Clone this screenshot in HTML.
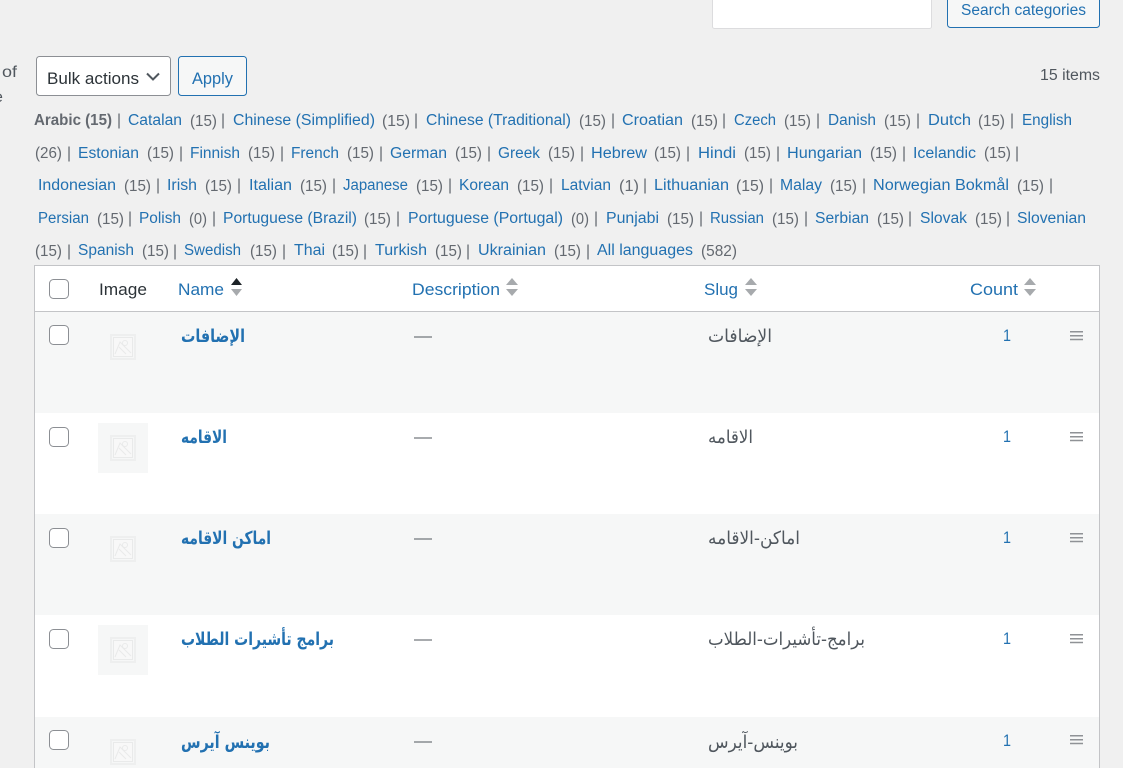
<!DOCTYPE html>
<html lang="en"><head><meta charset="utf-8"><title>Categories</title>
<style>
html,body{margin:0;padding:0;background:#f0f0f0;overflow:hidden;width:1123px;height:768px}
svg{display:block;position:absolute;left:0;top:0}
text{font-family:"Liberation Sans","DejaVu Sans",sans-serif;font-size:15.5px;fill:#646970}
.l{fill:#2271b1}
.s{fill:#646970}
.d{fill:#50575e;font-size:16px}
.h{font-size:16.5px}
.ar{font-family:"DejaVu Sans",sans-serif;direction:rtl;font-size:18px}
.n{fill:#2271b1;font-weight:bold}
.g{fill:#50575e}
.cb{fill:#fff;stroke:#8c8f94;stroke-width:1}
</style></head><body>
<svg width="1123" height="768" viewBox="0 0 1123 768" xmlns="http://www.w3.org/2000/svg">
<defs>
<g id="ph"><rect x="1" y="1" width="24" height="24" fill="#f6f7f7" stroke="#eeefef" stroke-width="2"/><rect x="3.500" y="3.500" width="19" height="19" fill="#f8f8f8" stroke="#e9eaea"/><path d="M5 20 L10 8 L21 19 M9 13 L16 20" fill="none" stroke="#e9eaea" stroke-width="1"/><circle cx="15" cy="9" r="2.500" fill="none" stroke="#e9eaea"/></g>
<path id="hd" d="M0 .75H13M0 4.75H13M0 8.5H13" stroke="#8f9296" stroke-width="1.5" fill="none"/>
</defs>
<rect width="1123" height="768" fill="#f0f0f0"/>

<rect x="712.500" y="-5" width="219" height="33.500" rx="2" fill="#fff" stroke="#dcdcde"/>
<rect x="947.500" y="-5" width="152" height="32.500" rx="3" fill="#f6f7f7" stroke="#2271b1"/>
<text class="l" x="961" y="15" textLength="125" lengthAdjust="spacingAndGlyphs">Search categories</text>
<text x="2" y="77" class="d" textLength="15" lengthAdjust="spacingAndGlyphs">of</text>
<text x="-6" y="102" class="d">e</text>

<rect x="36.500" y="56.500" width="134" height="39" rx="3" fill="#fff" stroke="#8c8f94"/>
<text class="h" x="47" y="84" textLength="92" lengthAdjust="spacingAndGlyphs" style="fill:#2c3338">Bulk actions</text>
<path d="M147 73.500L153 79.500L159 73.500" fill="none" stroke="#50575e" stroke-width="2"/>
<rect x="178.500" y="56.500" width="68" height="39" rx="3" fill="#f6f7f7" stroke="#2271b1"/>
<text class="l h" x="192" y="84" textLength="41" lengthAdjust="spacingAndGlyphs">Apply</text>
<text x="1040" y="80" textLength="60" lengthAdjust="spacingAndGlyphs" style="fill:#50575e">15 items</text>

<!-- filter line 1 -->
<text x="34" y="125" style="font-weight:bold" textLength="78" lengthAdjust="spacingAndGlyphs">Arabic (15)</text><text class="s" x="117" y="125">|</text>
<text class="l" x="128" y="125" textLength="54" lengthAdjust="spacingAndGlyphs">Catalan</text><text x="190" y="126" textLength="27" lengthAdjust="spacingAndGlyphs">(15)</text><text class="s" x="221" y="125">|</text>
<text class="l" x="233" y="125" textLength="142" lengthAdjust="spacingAndGlyphs">Chinese (Simplified)</text><text x="382" y="126" textLength="28" lengthAdjust="spacingAndGlyphs">(15)</text><text class="s" x="414" y="125">|</text>
<text class="l" x="426" y="125" textLength="145" lengthAdjust="spacingAndGlyphs">Chinese (Traditional)</text><text x="579" y="126" textLength="27" lengthAdjust="spacingAndGlyphs">(15)</text><text class="s" x="611" y="125">|</text>
<text class="l" x="622" y="125" textLength="61" lengthAdjust="spacingAndGlyphs">Croatian</text><text x="691" y="126" textLength="27" lengthAdjust="spacingAndGlyphs">(15)</text><text class="s" x="722" y="125">|</text>
<text class="l" x="734" y="125" textLength="42" lengthAdjust="spacingAndGlyphs">Czech</text><text x="784" y="126" textLength="27" lengthAdjust="spacingAndGlyphs">(15)</text><text class="s" x="816" y="125">|</text>
<text class="l" x="828" y="125" textLength="48" lengthAdjust="spacingAndGlyphs">Danish</text><text x="884" y="126" textLength="27" lengthAdjust="spacingAndGlyphs">(15)</text><text class="s" x="916" y="125">|</text>
<text class="l" x="928" y="125" textLength="43" lengthAdjust="spacingAndGlyphs">Dutch</text><text x="978" y="126" textLength="27" lengthAdjust="spacingAndGlyphs">(15)</text><text class="s" x="1010" y="125">|</text>
<text class="l" x="1022" y="125" textLength="50" lengthAdjust="spacingAndGlyphs">English</text>

<!-- filter line 2 -->
<text x="35" y="158" textLength="27" lengthAdjust="spacingAndGlyphs">(26)</text><text class="s" x="67" y="158">|</text>
<text class="l" x="78" y="158" textLength="61" lengthAdjust="spacingAndGlyphs">Estonian</text><text x="147" y="158" textLength="27" lengthAdjust="spacingAndGlyphs">(15)</text><text class="s" x="179" y="158">|</text>
<text class="l" x="190" y="158" textLength="50" lengthAdjust="spacingAndGlyphs">Finnish</text><text x="248" y="158" textLength="27" lengthAdjust="spacingAndGlyphs">(15)</text><text class="s" x="280" y="158">|</text>
<text class="l" x="291" y="158" textLength="48" lengthAdjust="spacingAndGlyphs">French</text><text x="347" y="158" textLength="27" lengthAdjust="spacingAndGlyphs">(15)</text><text class="s" x="379" y="158">|</text>
<text class="l" x="390" y="158" textLength="57" lengthAdjust="spacingAndGlyphs">German</text><text x="455" y="158" textLength="27" lengthAdjust="spacingAndGlyphs">(15)</text><text class="s" x="487" y="158">|</text>
<text class="l" x="498" y="158" textLength="42" lengthAdjust="spacingAndGlyphs">Greek</text><text x="548" y="158" textLength="27" lengthAdjust="spacingAndGlyphs">(15)</text><text class="s" x="580" y="158">|</text>
<text class="l" x="591" y="158" textLength="56" lengthAdjust="spacingAndGlyphs">Hebrew</text><text x="654" y="158" textLength="27" lengthAdjust="spacingAndGlyphs">(15)</text><text class="s" x="686" y="158">|</text>
<text class="l" x="698" y="158" textLength="38" lengthAdjust="spacingAndGlyphs">Hindi</text><text x="744" y="158" textLength="27" lengthAdjust="spacingAndGlyphs">(15)</text><text class="s" x="776" y="158">|</text>
<text class="l" x="787" y="158" textLength="75" lengthAdjust="spacingAndGlyphs">Hungarian</text><text x="870" y="158" textLength="27" lengthAdjust="spacingAndGlyphs">(15)</text><text class="s" x="902" y="158">|</text>
<text class="l" x="913" y="158" textLength="63" lengthAdjust="spacingAndGlyphs">Icelandic</text><text x="984" y="158" textLength="27" lengthAdjust="spacingAndGlyphs">(15)</text><text class="s" x="1015" y="158">|</text>

<!-- filter line 3 -->
<text class="l" x="38" y="190" textLength="78" lengthAdjust="spacingAndGlyphs">Indonesian</text><text x="124" y="191" textLength="27" lengthAdjust="spacingAndGlyphs">(15)</text><text class="s" x="156" y="190">|</text>
<text class="l" x="167" y="190" textLength="30" lengthAdjust="spacingAndGlyphs">Irish</text><text x="205" y="191" textLength="27" lengthAdjust="spacingAndGlyphs">(15)</text><text class="s" x="237" y="190">|</text>
<text class="l" x="249" y="190" textLength="43" lengthAdjust="spacingAndGlyphs">Italian</text><text x="300" y="191" textLength="27" lengthAdjust="spacingAndGlyphs">(15)</text><text class="s" x="332" y="190">|</text>
<text class="l" x="343" y="190" textLength="65" lengthAdjust="spacingAndGlyphs">Japanese</text><text x="416" y="191" textLength="27" lengthAdjust="spacingAndGlyphs">(15)</text><text class="s" x="448" y="190">|</text>
<text class="l" x="459" y="190" textLength="50" lengthAdjust="spacingAndGlyphs">Korean</text><text x="517" y="191" textLength="27" lengthAdjust="spacingAndGlyphs">(15)</text><text class="s" x="549" y="190">|</text>
<text class="l" x="561" y="190" textLength="50" lengthAdjust="spacingAndGlyphs">Latvian</text><text x="619" y="191" textLength="20" lengthAdjust="spacingAndGlyphs">(1)</text><text class="s" x="643" y="190">|</text>
<text class="l" x="654" y="190" textLength="75" lengthAdjust="spacingAndGlyphs">Lithuanian</text><text x="736" y="191" textLength="28" lengthAdjust="spacingAndGlyphs">(15)</text><text class="s" x="769" y="190">|</text>
<text class="l" x="780" y="190" textLength="42" lengthAdjust="spacingAndGlyphs">Malay</text><text x="830" y="191" textLength="27" lengthAdjust="spacingAndGlyphs">(15)</text><text class="s" x="862" y="190">|</text>
<text class="l" x="873" y="190" textLength="136" lengthAdjust="spacingAndGlyphs">Norwegian Bokmål</text><text x="1017" y="191" textLength="27" lengthAdjust="spacingAndGlyphs">(15)</text><text class="s" x="1049" y="190">|</text>

<!-- filter line 4 -->
<text class="l" x="38" y="223" textLength="51" lengthAdjust="spacingAndGlyphs">Persian</text><text x="97" y="224" textLength="27" lengthAdjust="spacingAndGlyphs">(15)</text><text class="s" x="128" y="223">|</text>
<text class="l" x="139" y="223" textLength="42" lengthAdjust="spacingAndGlyphs">Polish</text><text x="189" y="224" textLength="18" lengthAdjust="spacingAndGlyphs">(0)</text><text class="s" x="212" y="223">|</text>
<text class="l" x="223" y="223" textLength="134" lengthAdjust="spacingAndGlyphs">Portuguese (Brazil)</text><text x="364" y="224" textLength="27" lengthAdjust="spacingAndGlyphs">(15)</text><text class="s" x="396" y="223">|</text>
<text class="l" x="408" y="223" textLength="155" lengthAdjust="spacingAndGlyphs">Portuguese (Portugal)</text><text x="571" y="224" textLength="18" lengthAdjust="spacingAndGlyphs">(0)</text><text class="s" x="594" y="223">|</text>
<text class="l" x="606" y="223" textLength="53" lengthAdjust="spacingAndGlyphs">Punjabi</text><text x="667" y="224" textLength="27" lengthAdjust="spacingAndGlyphs">(15)</text><text class="s" x="699" y="223">|</text>
<text class="l" x="710" y="223" textLength="54" lengthAdjust="spacingAndGlyphs">Russian</text><text x="772" y="224" textLength="27" lengthAdjust="spacingAndGlyphs">(15)</text><text class="s" x="804" y="223">|</text>
<text class="l" x="815" y="223" textLength="54" lengthAdjust="spacingAndGlyphs">Serbian</text><text x="877" y="224" textLength="27" lengthAdjust="spacingAndGlyphs">(15)</text><text class="s" x="908" y="223">|</text>
<text class="l" x="920" y="223" textLength="47" lengthAdjust="spacingAndGlyphs">Slovak</text><text x="975" y="224" textLength="27" lengthAdjust="spacingAndGlyphs">(15)</text><text class="s" x="1006" y="223">|</text>
<text class="l" x="1017" y="223" textLength="69" lengthAdjust="spacingAndGlyphs">Slovenian</text>

<!-- filter line 5 -->
<text x="35" y="256" textLength="27" lengthAdjust="spacingAndGlyphs">(15)</text><text class="s" x="67" y="256">|</text>
<text class="l" x="78" y="255" textLength="56" lengthAdjust="spacingAndGlyphs">Spanish</text><text x="142" y="256" textLength="27" lengthAdjust="spacingAndGlyphs">(15)</text><text class="s" x="173" y="256">|</text>
<text class="l" x="184" y="255" textLength="57" lengthAdjust="spacingAndGlyphs">Swedish</text><text x="250" y="256" textLength="27" lengthAdjust="spacingAndGlyphs">(15)</text><text class="s" x="282" y="256">|</text>
<text class="l" x="294" y="255" textLength="31" lengthAdjust="spacingAndGlyphs">Thai</text><text x="332" y="256" textLength="27" lengthAdjust="spacingAndGlyphs">(15)</text><text class="s" x="363" y="256">|</text>
<text class="l" x="375" y="255" textLength="52" lengthAdjust="spacingAndGlyphs">Turkish</text><text x="435" y="256" textLength="27" lengthAdjust="spacingAndGlyphs">(15)</text><text class="s" x="466" y="256">|</text>
<text class="l" x="478" y="255" textLength="68" lengthAdjust="spacingAndGlyphs">Ukrainian</text><text x="554" y="256" textLength="27" lengthAdjust="spacingAndGlyphs">(15)</text><text class="s" x="586" y="256">|</text>
<text class="l" x="597" y="255" textLength="96" lengthAdjust="spacingAndGlyphs">All languages</text><text x="701" y="256" textLength="36" lengthAdjust="spacingAndGlyphs">(582)</text>

<!-- table -->
<rect x="34.500" y="265.500" width="1065" height="520" fill="#fff" stroke="#c3c4c7"/>
<rect x="35" y="311" width="1064" height="1" fill="#c3c4c7"/>
<rect x="35" y="312" width="1064" height="101" fill="#f6f7f7"/>
<rect x="35" y="514" width="1064" height="101" fill="#f6f7f7"/>
<rect x="35" y="717" width="1064" height="51" fill="#f6f7f7"/>

<!-- header -->
<rect class="cb" x="49.500" y="279.500" width="19" height="19" rx="4"/>
<text class="h" x="99" y="295" textLength="48" lengthAdjust="spacingAndGlyphs" style="fill:#2c3338">Image</text>
<text class="l h" x="178" y="295" textLength="46" lengthAdjust="spacingAndGlyphs">Name</text>
<path d="M231 285L236.500 278L242 285Z" fill="#1d2327"/><path d="M231 289L236.500 296L242 289Z" fill="#a7aaad"/>
<text class="l h" x="412" y="295" textLength="88" lengthAdjust="spacingAndGlyphs">Description</text>
<path d="M506 285L512 278L518 285Z" fill="#a7aaad"/><path d="M506 289L512 296L518 289Z" fill="#a7aaad"/>
<text class="l h" x="704" y="295" textLength="34" lengthAdjust="spacingAndGlyphs">Slug</text>
<path d="M745 285L751 278L757 285Z" fill="#a7aaad"/><path d="M745 289L751 296L757 289Z" fill="#a7aaad"/>
<text class="l h" x="970" y="295" textLength="48" lengthAdjust="spacingAndGlyphs">Count</text>
<path d="M1024 285L1030 278L1036 285Z" fill="#a7aaad"/><path d="M1024 289L1030 296L1036 289Z" fill="#a7aaad"/>

<!-- row 1 -->
<rect class="cb" x="49.500" y="325.500" width="19" height="19" rx="4"/>
<rect x="98" y="322" width="50" height="50" fill="#f6f7f7"/><use href="#ph" x="110" y="334"/>
<text class="ar n" x="245" y="342" textLength="64" lengthAdjust="spacingAndGlyphs">الإضافات</text>
<text x="414" y="341" class="d" textLength="18" lengthAdjust="spacingAndGlyphs">—</text>
<text class="ar g" x="772" y="342" textLength="64" lengthAdjust="spacingAndGlyphs">الإضافات</text>
<text class="l h" x="1003" y="341" textLength="8" lengthAdjust="spacingAndGlyphs">1</text>
<use href="#hd" x="1070" y="331"/>

<!-- row 2 -->
<rect class="cb" x="49.500" y="427.500" width="19" height="19" rx="4"/>
<rect x="98" y="423" width="50" height="50" fill="#f6f7f7"/><use href="#ph" x="110" y="435"/>
<text class="ar n" x="227" y="443" textLength="46" lengthAdjust="spacingAndGlyphs">الاقامه</text>
<text x="414" y="442" class="d" textLength="18" lengthAdjust="spacingAndGlyphs">—</text>
<text class="ar g" x="753" y="443" textLength="45" lengthAdjust="spacingAndGlyphs">الاقامه</text>
<text class="l h" x="1003" y="442" textLength="8" lengthAdjust="spacingAndGlyphs">1</text>
<use href="#hd" x="1070" y="432"/>

<!-- row 3 -->
<rect class="cb" x="49.500" y="528.500" width="19" height="19" rx="4"/>
<rect x="98" y="524" width="50" height="50" fill="#f6f7f7"/><use href="#ph" x="110" y="536"/>
<text class="ar n" x="271" y="544" textLength="90" lengthAdjust="spacingAndGlyphs">اماكن الاقامه</text>
<text x="414" y="543" class="d" textLength="18" lengthAdjust="spacingAndGlyphs">—</text>
<text class="ar g" x="800" y="544" textLength="92" lengthAdjust="spacingAndGlyphs">اماكن-الاقامه</text>
<text class="l h" x="1003" y="543" textLength="8" lengthAdjust="spacingAndGlyphs">1</text>
<use href="#hd" x="1070" y="533"/>

<!-- row 4 -->
<rect class="cb" x="49.500" y="629.500" width="19" height="19" rx="4"/>
<rect x="98" y="625" width="50" height="50" fill="#f6f7f7"/><use href="#ph" x="110" y="637"/>
<text class="ar n" x="334" y="645" textLength="153" lengthAdjust="spacingAndGlyphs">برامج تأشيرات الطلاب</text>
<text x="414" y="644" class="d" textLength="18" lengthAdjust="spacingAndGlyphs">—</text>
<text class="ar g" x="865" y="645" textLength="157" lengthAdjust="spacingAndGlyphs">برامج-تأشيرات-الطلاب</text>
<text class="l h" x="1003" y="644" textLength="8" lengthAdjust="spacingAndGlyphs">1</text>
<use href="#hd" x="1070" y="634"/>

<!-- row 5 -->
<rect class="cb" x="49.500" y="730.500" width="19" height="19" rx="4"/>
<rect x="98" y="727" width="50" height="50" fill="#f6f7f7"/><use href="#ph" x="110" y="739"/>
<text class="ar n" x="270" y="748" textLength="89" lengthAdjust="spacingAndGlyphs">بوينس آيرس</text>
<text x="414" y="746" class="d" textLength="18" lengthAdjust="spacingAndGlyphs">—</text>
<text class="ar g" x="798" y="748" textLength="90" lengthAdjust="spacingAndGlyphs">بوينس-آيرس</text>
<text class="l h" x="1003" y="746" textLength="8" lengthAdjust="spacingAndGlyphs">1</text>
<use href="#hd" x="1070" y="735"/>
</svg>
</body></html>
